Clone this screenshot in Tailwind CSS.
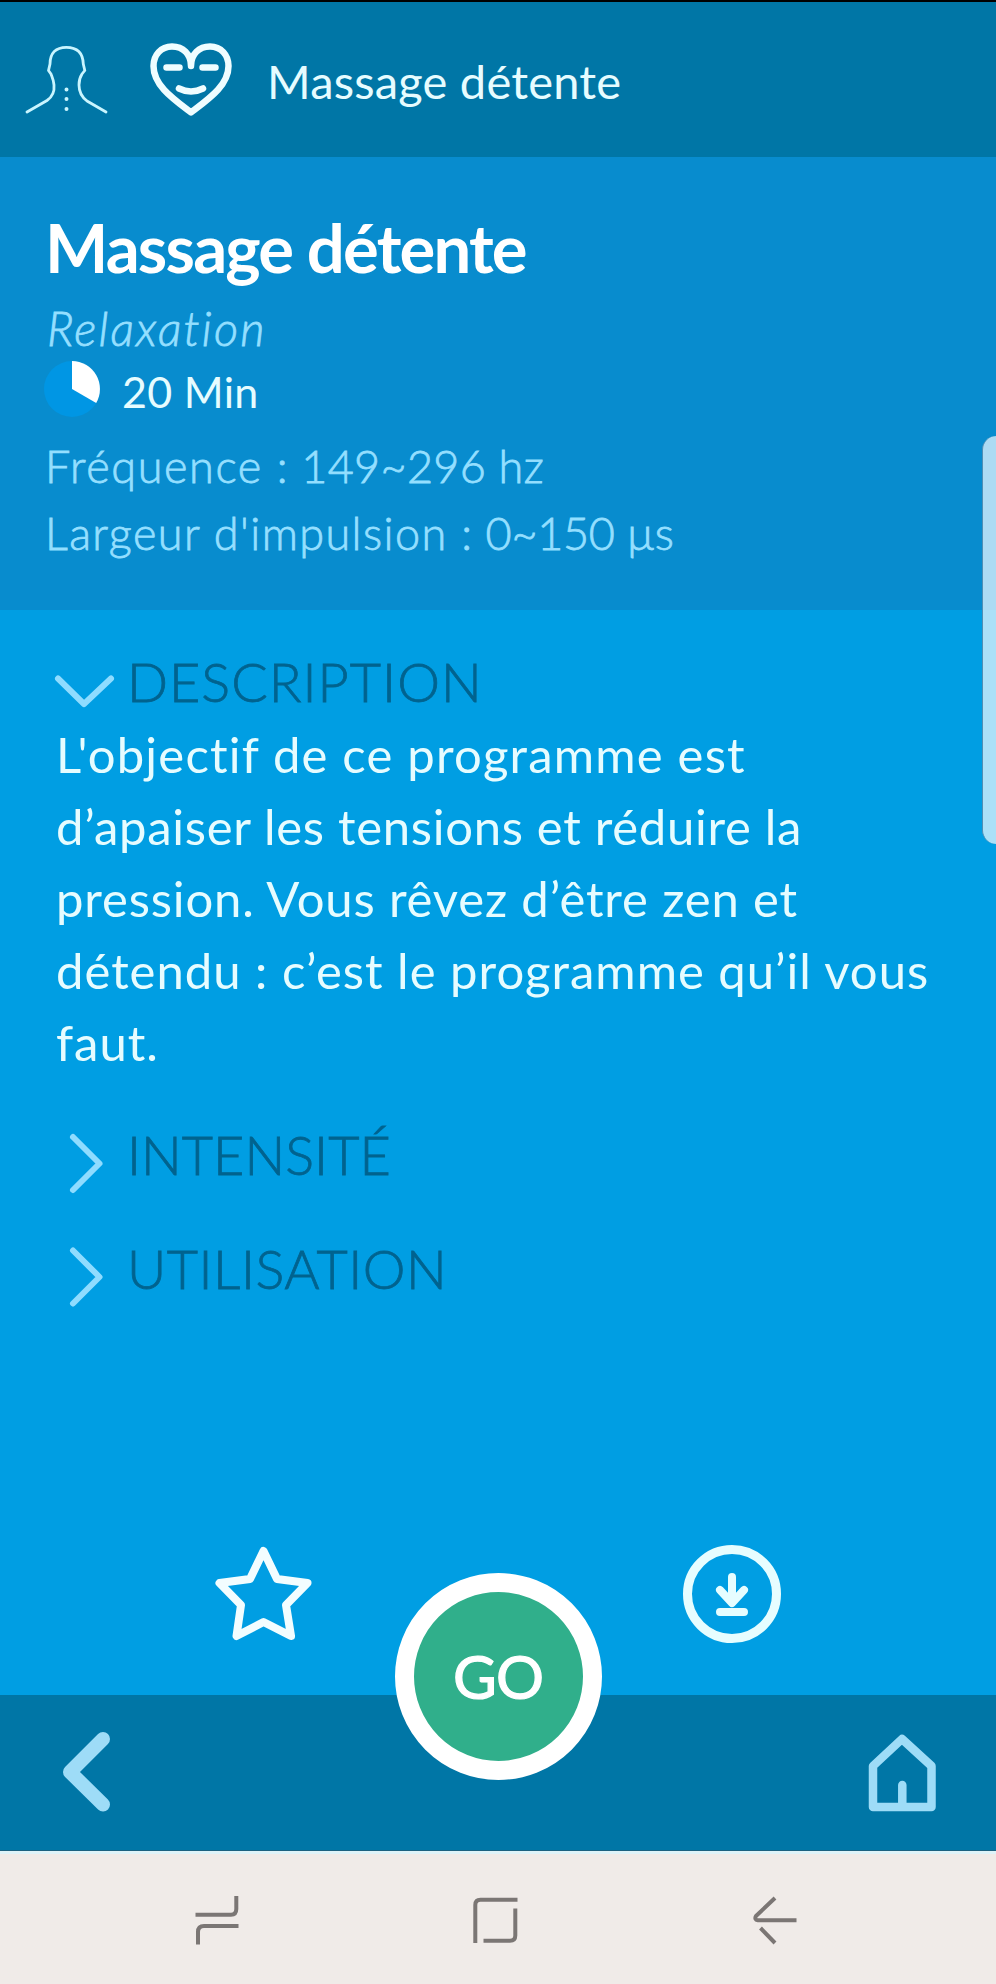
<!DOCTYPE html>
<html lang="fr">

<head>
    <meta charset="UTF-8">
    <meta name="viewport" content="width=device-width, initial-scale=1.0">
    <title>Massage détente</title>
    <script src="https://cdn.jsdelivr.net/npm/@tailwindcss/browser@4"></script>
</head>

<body class="bg-[#009ee3]">
    <div class="relative flex flex-col w-[996px] h-[1984px] overflow-hidden font-['Lato',sans-serif] text-[#e6fcff]">
        <header class="flex items-center h-[157px] border-t-2 border-black bg-[#0076a6]">
            <svg class="w-[84px] h-[72px] ml-6 mb-[2px]" viewBox="24 43 84 72" fill="none" stroke="#c9f5ff" stroke-width="2.8" stroke-linecap="round" stroke-linejoin="round">
                <path d="M27 112 L47 100.500 Q55 95 54 85 C53.500 79 52 77 51 74 L48.500 70.500 L50 64 C50 53 56 47.300 66.300 47.300 C77 47.300 83 53 83.300 64 L84.800 70.500 L82 74 C80 77 79 79 79 85 Q79 95 87 101 L106 112" />
                <path d="M66.500 89.500v.1M66.500 99v.1M66.500 109v.1" stroke-width="4" />
            </svg>
            <svg class="w-[84px] h-[76px] ml-[41px] mb-[1px]" viewBox="149 41 84 76" fill="none" stroke="#effdff" stroke-width="6.500" stroke-linecap="round" stroke-linejoin="round">
                <path d="M191 66 C191 54 183 46.500 172 46.500 C161 46.500 153.500 55 153.500 66 C153.500 85 172 98 191 112.500 C210 98 228.500 85 228.500 66 C228.500 55 221 46.500 210 46.500 C199 46.500 191 54 191 66" />
                <path d="M166.500 67.500h13M202.500 67.500h13M179 88.500q12 6 24 0" />
            </svg>
            <h1 class="ml-[34px] pt-[4px] text-[47px] tracking-[0.2px]">Massage détente</h1>
        </header>

        <section class="h-[453px] pl-[47px] pt-[50px] bg-[#088cce]">
            <h2 class="-ml-[2px] text-[67px] leading-[80px] font-bold text-white tracking-[-1.8px]">Massage détente</h2>
            <p class="mt-[6px] text-[47px] leading-[70px] italic font-light text-[#94dfff] tracking-[2.2px] [-webkit-text-stroke:0.8px_#94dfff]">Relaxation</p>
            <div class="flex items-center h-[54px] -mt-[1px]">
                <svg class="w-[56px] h-[56px] -ml-[3px]" viewBox="0 0 56 56">
                    <circle cx="28" cy="28" r="28" fill="#0096e4" />
                    <path d="M28 0A28 28 0 0 1 52.200 42L28 28Z" fill="#fff" />
                </svg>
                <span class="ml-[22px] pt-[6px] text-[43px] tracking-[0.3px]">20 Min</span>
            </div>
            <p class="mt-[17px] -ml-[2px] text-[45px] leading-[67px] font-light text-[#94dfff] [-webkit-text-stroke:0.8px_#94dfff]">
                <span class="tracking-[1.6px]">Fréquence :</span> <span class="tracking-[0.3px]">149~296 hz</span><br>
                <span class="tracking-[1.4px]">Largeur d'impulsion :</span> <span class="tracking-[-0.3px]">0~150 µs</span>
            </p>
        </section>

        <main class="flex flex-col h-[1085px] pl-[56px] pt-[41px]">
            <div class="flex items-center h-[60px]">
                <svg class="w-[76px] h-[60px] overflow-visible" viewBox="0 0 76 60" fill="none" stroke="#8fdcff" stroke-width="6" stroke-linecap="round" stroke-linejoin="round">
                    <path d="M2 27.500L28 53L55 27.500" />
                </svg>
                <h3 class="-ml-[5px] text-[54px] font-light text-[#00638f] tracking-[1px] [-webkit-text-stroke:0.8px_#00638f]">DESCRIPTION</h3>
            </div>
            <p class="mt-[7px] text-[49px] leading-[72px] tracking-[1px]">
                <span class="tracking-[1.2px]">L'objectif de ce programme est</span><br>
                <span class="tracking-[0.7px]">d’apaiser les tensions et réduire la</span><br>
                <span class="tracking-[0.85px]">pression. Vous rêvez d’être zen et</span><br>
                détendu : c’est le programme qu’il vous<br>
                faut.
            </p>
            <div class="flex items-center h-[60px] mt-[46px]">
                <svg class="w-[76px] h-[60px] overflow-visible" viewBox="0 0 76 60" fill="none" stroke="#8fdcff" stroke-width="6" stroke-linecap="round" stroke-linejoin="round">
                    <path d="M17 13L43.500 39.500L17 66" />
                </svg>
                <h3 class="-ml-[5px] text-[54px] font-light text-[#00638f] [-webkit-text-stroke:0.8px_#00638f]">INTENSITÉ</h3>
            </div>
            <div class="flex items-center h-[60px] mt-[54px]">
                <svg class="w-[76px] h-[60px] overflow-visible" viewBox="0 0 76 60" fill="none" stroke="#8fdcff" stroke-width="6" stroke-linecap="round" stroke-linejoin="round">
                    <path d="M17 12.500L43.500 39L17 65.500" />
                </svg>
                <h3 class="-ml-[5px] text-[54px] font-light text-[#00638f] tracking-[0.5px] [-webkit-text-stroke:0.8px_#00638f]">UTILISATION</h3>
            </div>
            <div class="flex items-center mt-auto mb-[52px] ml-[158px] gap-[371px]">
                <svg class="w-[98px] h-[98px]" viewBox="214 1545 98 98" fill="none" stroke="#f2fdff" stroke-width="8" stroke-linecap="round" stroke-linejoin="round">
                    <path d="M263.500 1551L277 1579L307.500 1583L286 1605L291 1636L263.500 1622L236.500 1636L241 1605L219.500 1583L250 1579Z" />
                </svg>
                <svg class="w-[98px] h-[98px]" viewBox="0 0 98 98" fill="none" stroke="#e6fdff" stroke-width="8" stroke-linecap="round" stroke-linejoin="round">
                    <circle cx="49" cy="49" r="44.500" stroke-width="9" />
                    <path d="M49 32V57M37 45L49 58L61 45M37 67H61" />
                </svg>
            </div>
        </main>

        <nav class="relative flex items-center justify-between h-[156px] pl-[60px] pr-[58px] bg-[#0076a6] border-b border-[#1c6280]">
            <svg class="w-[52px] h-[84px]" viewBox="60 1730 52 84" fill="none" stroke="#9edcf7" stroke-width="14" stroke-linecap="round" stroke-linejoin="round">
                <path d="M103 1738L70 1771L103 1803.500" />
            </svg>
            <svg class="w-[72px] h-[84px]" viewBox="866 1731 72 84" fill="none" stroke="#9edcf7" stroke-width="8.500" stroke-linecap="round" stroke-linejoin="round">
                <path d="M902 1739L931.500 1766V1807H873V1766ZM902.300 1785V1806" />
            </svg>
            <button class="absolute left-[394.5px] -top-[122px] w-[207px] h-[207px] rounded-full border-[19px] border-white bg-[#30af8b] pb-[2px] text-[60px] text-white tracking-[-1px] [-webkit-text-stroke:1.2px_#fff]">GO</button>
        </nav>

        <!-- Android navigation bar -->
        <div class="flex items-start h-[133px] pt-[40px] bg-[#f0ebe8] border-t-3 border-[#dff3f8]">
            <svg class="w-[48px] h-[52px] ml-[193px]" viewBox="193 1894 48 52" fill="none" stroke="#7b7674" stroke-width="4">
                <path d="M195.500 1914.700H231Q236.300 1914.700 236.300 1909V1896M238.500 1926H204Q198 1926 198 1932V1944.500" />
            </svg>
            <svg class="w-[48px] h-[52px] ml-[230px]" viewBox="471 1894 48 52" fill="none" stroke="#7b7674" stroke-width="4">
                <path d="M475.300 1943V1905Q475.300 1899.800 480.500 1899.800H517.500M515.300 1908.500V1935.500Q515.300 1940.700 510 1940.700H483.500" />
            </svg>
            <svg class="w-[48px] h-[52px] ml-[232px]" viewBox="751 1894 48 52" fill="none" stroke="#7b7674" stroke-width="4" stroke-linejoin="round">
                <path d="M796.500 1920.300H758Q754 1919.500 756 1916L775 1898M760.500 1928L775 1943" />
            </svg>
        </div>

        <!-- edge panel handle -->
        <div class="absolute right-0 top-[436px] w-[14px] h-[408px] rounded-l-[14px] bg-[#e4f5ff]/75 border-l border-[#4f8fb5]"></div>
    </div>
</body>

</html>
